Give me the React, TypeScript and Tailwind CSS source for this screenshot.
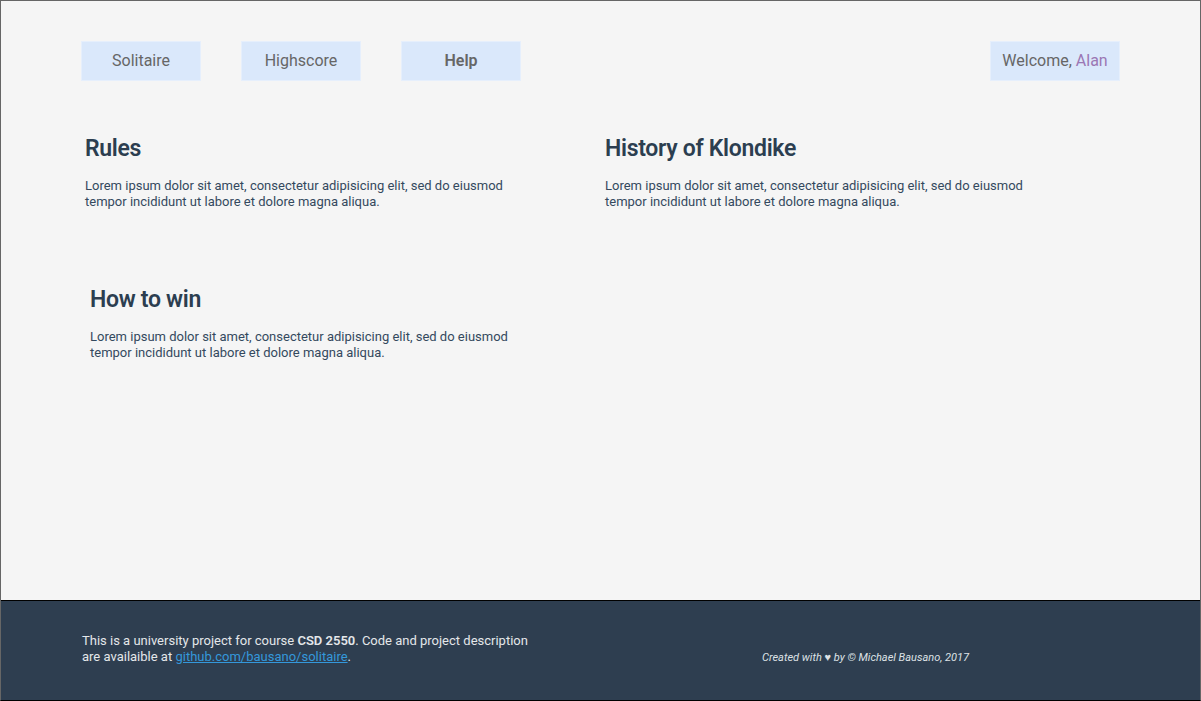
import React from 'react';

const NAV = ['Solitaire', 'Highscore', 'Help'];

const SECTIONS = [
  { title: 'Rules', pad: '' },
  { title: 'History of Klondike', pad: '' },
  { title: 'How to win', pad: 'pl-[5px]' },
];

const Section: React.FC<{ title: string; pad: string }> = ({ title, pad }) => (
  <div className={pad}>
    <h2 className="text-[23px] leading-[28px] font-semibold text-[#2c3e50] tracking-[-0.3px]">{title}</h2>
    <p className="mt-[15px] text-[13px] leading-[16px] text-[#34495e]">
      Lorem ipsum dolor sit amet, consectetur adipisicing elit, sed do eiusmod
      <br />
      tempor incididunt ut labore et dolore magna aliqua.
    </p>
  </div>
);

export default function App() {
  return (
    <div
      className="w-[1201px] h-[701px] flex flex-col border border-[#666] border-b-black bg-[#f5f5f5]"
      style={{ fontFamily: 'Roboto, "Noto Sans", sans-serif' }}
    >
      <main className="flex-1 px-[80px] pt-[40px]">
        <nav className="flex items-center justify-between">
          <div className="flex gap-[40px]">
            {NAV.map(n => (
              <button
                key={n}
                className={`w-[120px] h-[40px] bg-[#dae8fb] border border-[#e6effc] text-[16px] text-[#666] ${
                  n === 'Help' ? 'font-semibold text-[#555]' : ''
                }`}
              >
                {n}
              </button>
            ))}
          </div>
          <button className="w-[130px] h-[40px] bg-[#dae8fb] border border-[#e6effc] text-[16px] text-[#666]">
            Welcome, <span className="text-[#9b77b4]">Alan</span>
          </button>
        </nav>

        <div className="grid grid-cols-[520px_1fr] gap-y-[76px] mt-[54px] pl-[4px]">
          {SECTIONS.map(s => (
            <Section key={s.title} title={s.title} pad={s.pad} />
          ))}
        </div>
      </main>

      <footer className="h-[100px] border-t border-black bg-[#2e3e50] flex items-center pl-[81px] pr-[80px]">
        <p className="w-[680px] -mt-[4px] text-[13px] leading-[16px] text-[#e4e7ea]">
          This is a university project for course <b className="font-semibold">CSD 2550</b>. Code and project description
          <br />
          are availaible at{' '}
          <a href="#" className="text-[#3498db] underline">
            github.com/bausano/solitaire
          </a>
          .
        </p>
        <p className="pt-[16px] text-[11px] italic text-[#dde1e5]">
          Created with ♥ by © Michael Bausano, 2017
        </p>
      </footer>
    </div>
  );
}
